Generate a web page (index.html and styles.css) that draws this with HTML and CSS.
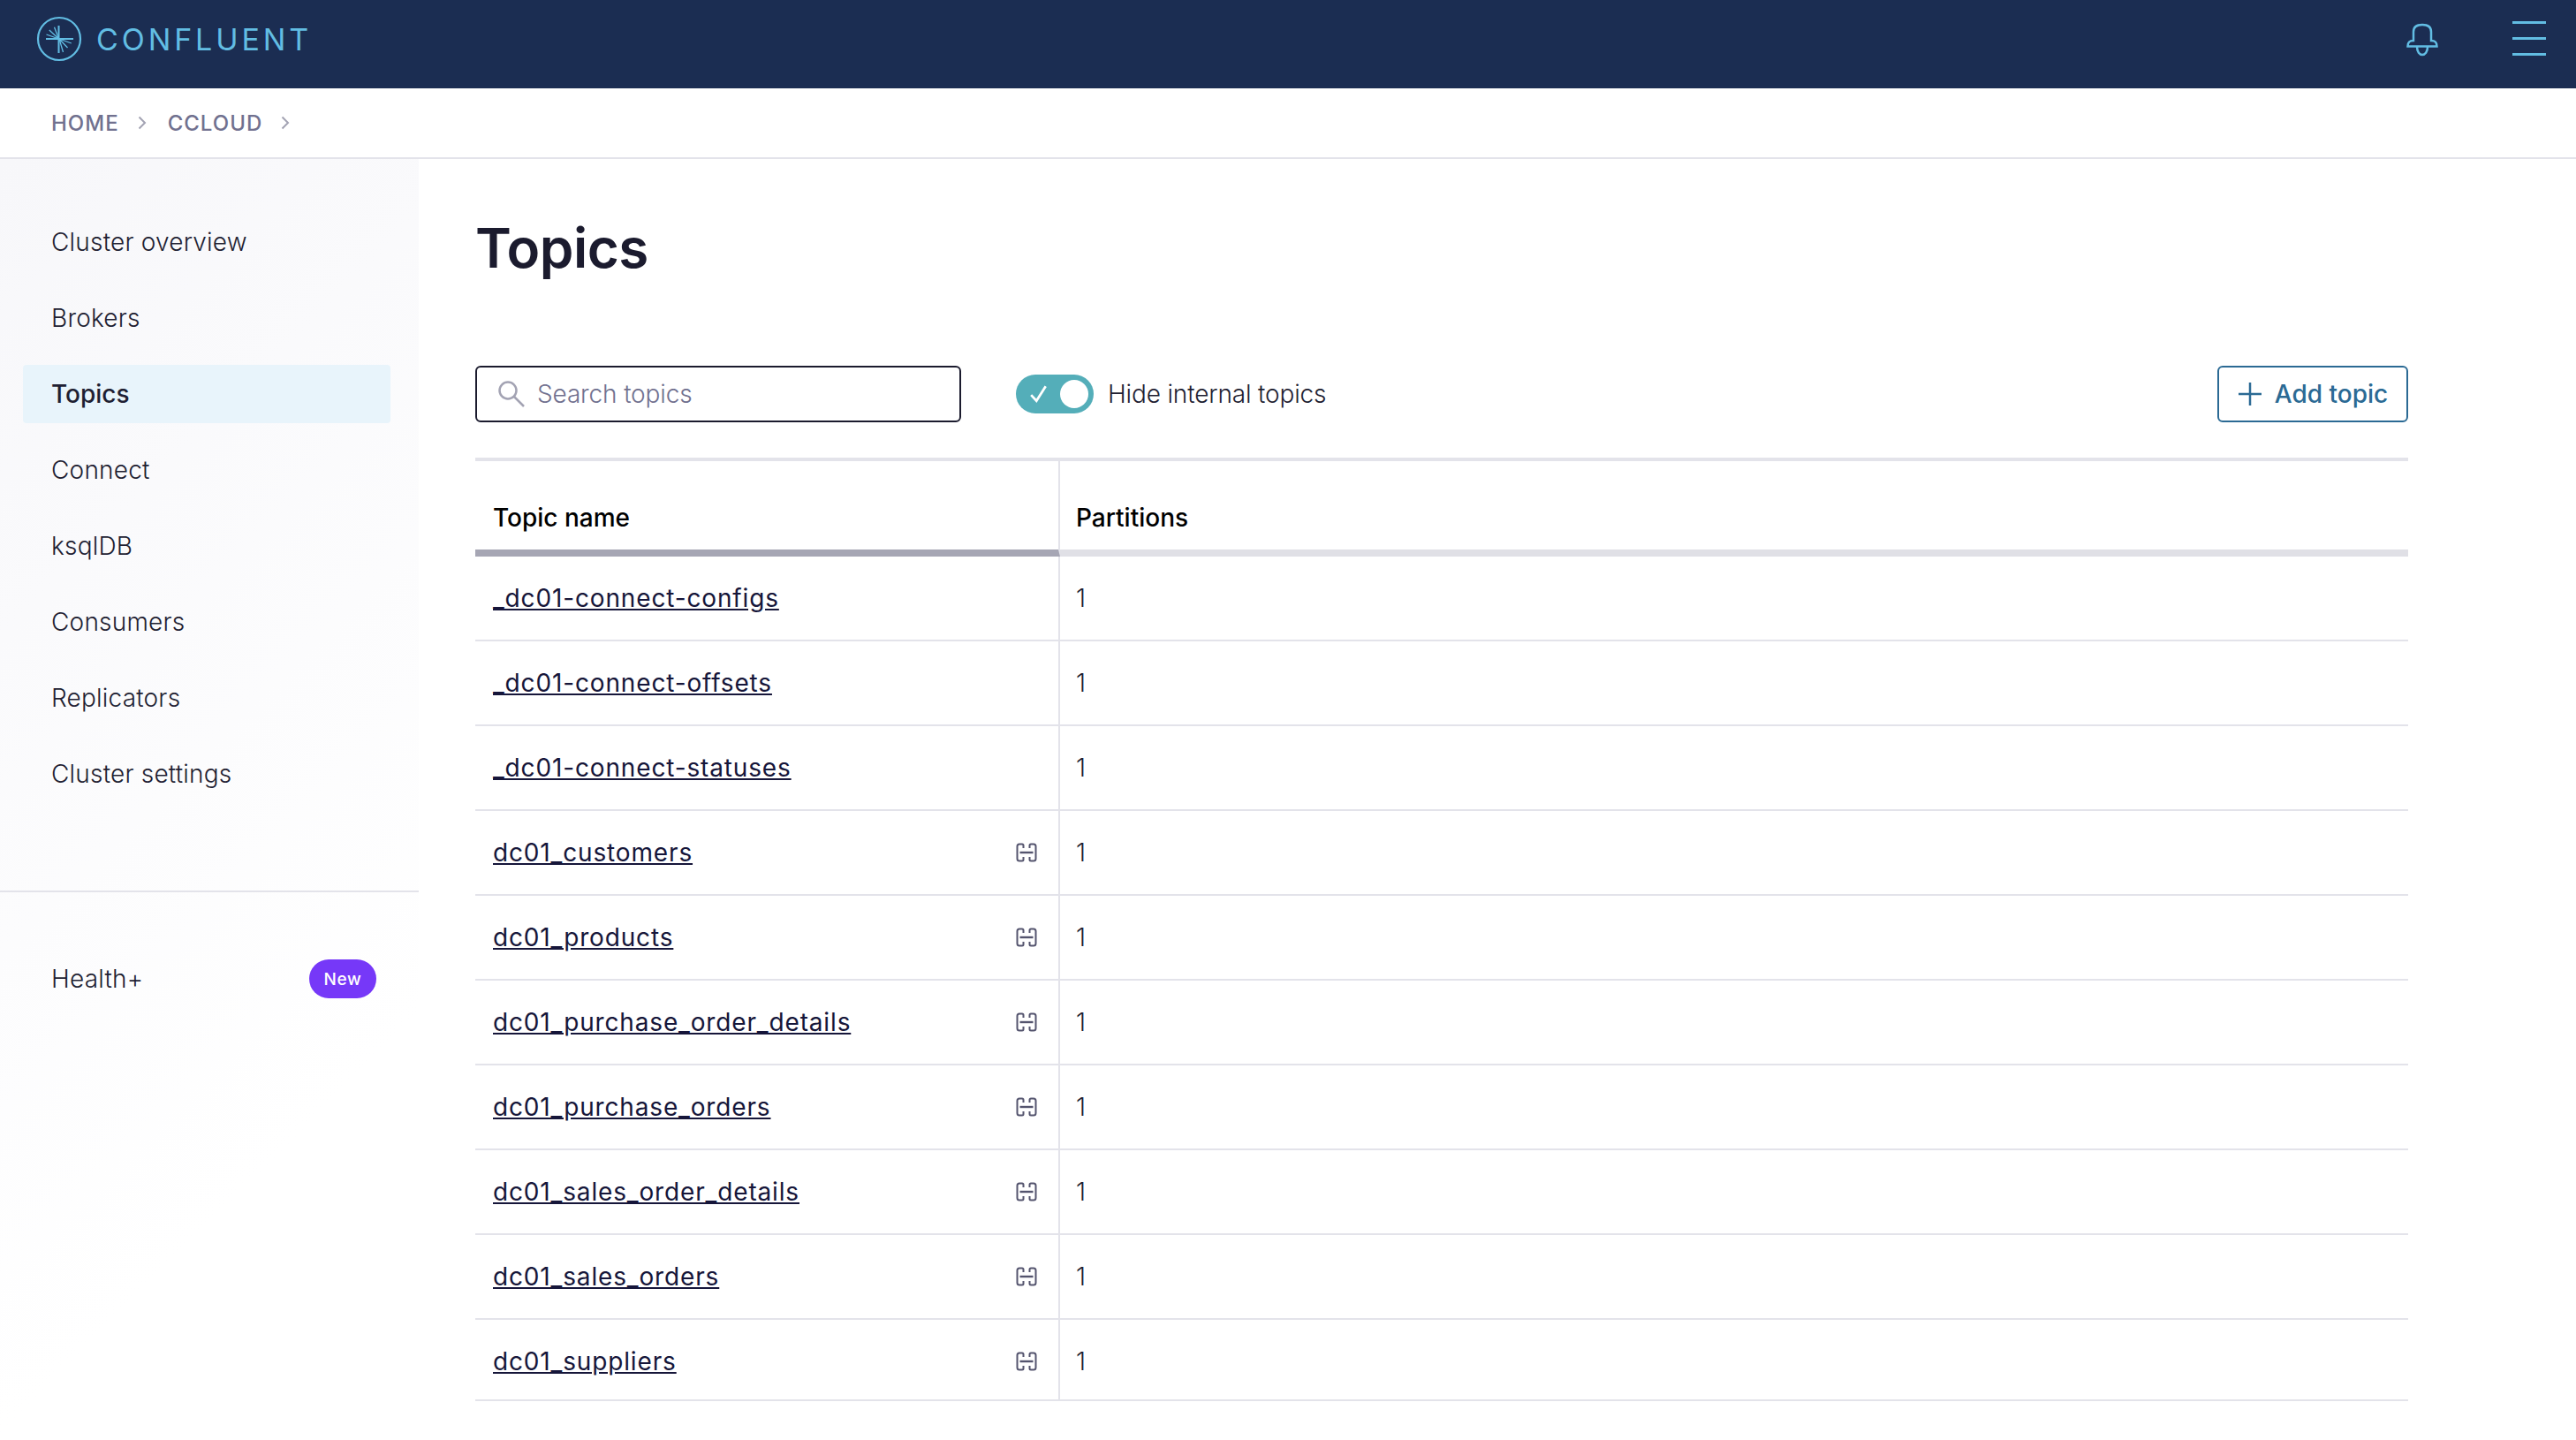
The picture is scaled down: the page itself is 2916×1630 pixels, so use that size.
FILE: index.html
```html
<!DOCTYPE html>
<html lang="en">
<head>
    <meta charset="UTF-8">
    <title>Topics</title>
    <link rel="stylesheet" href="styles.css">
</head>
<body>
    <header class="topbar">
        <a class="logo">
            <svg class="logo-mark" viewBox="0 0 52 52" fill="none" stroke="#62bde3">
                <circle cx="26" cy="26" r="24" stroke-width="2.200"/>
                <path stroke-width="2" d="M25.500 11V42M11 26H42"/>
                <path stroke-width="1.300" d="M25.500 26 20.500 12.700M25.500 26 14.800 16M25.500 26 11.500 21M26 26 30.500 41M26 26 35.500 36M26 26 39.800 31"/>
            </svg>
            <span class="logo-text">CONFLUENT</span>
        </a>
        <div class="topbar-actions">
            <svg class="bell" viewBox="0 0 36 38" fill="none" stroke="#62bde3" stroke-width="2.500">
                <path d="M8 20V10C8 5 11 2 18 2S28 5 28 10V20C32 20 34.500 21 34.500 26.500H1.500C1.500 21 4 20 8 20Z"/>
                <path d="M12 27C12 33 15 36 18 36S24 33 24 27"/>
            </svg>
            <div class="menu-icon"><span></span><span></span><span></span></div>
        </div>
    </header>

    <nav class="breadcrumb">
        <span>Home</span>
        <svg class="crumb-arrow" viewBox="0 0 10 16"><path d="M1.500 1.500 8 8 1.500 14.500"/></svg>
        <span>ccloud</span>
        <svg class="crumb-arrow" viewBox="0 0 10 16"><path d="M1.500 1.500 8 8 1.500 14.500"/></svg>
    </nav>

    <div class="layout">
        <aside class="sidebar">
            <ul class="side-nav">
                <li>Cluster overview</li>
                <li>Brokers</li>
                <li class="active">Topics</li>
                <li>Connect</li>
                <li>ksqlDB</li>
                <li>Consumers</li>
                <li>Replicators</li>
                <li>Cluster settings</li>
            </ul>
            <div class="side-extra">
                <span>Health+</span>
                <span class="badge">New</span>
            </div>
        </aside>

        <main class="content">
            <h1>Topics</h1>

            <div class="toolbar">
                <label class="search">
                    <svg class="search-icon" viewBox="0 0 32 32" fill="none" stroke="#a3a3b3" stroke-width="2.500">
                        <circle cx="12" cy="12" r="9.500"/>
                        <path d="M19 19 30 30"/>
                    </svg>
                    <input type="text" placeholder="Search topics">
                </label>
                <div class="toggle">
                    <span class="switch">
                        <svg viewBox="0 0 20 20" fill="none" stroke="#fff" stroke-width="2.500"><path d="M2 11 7.500 17 17 2"/></svg>
                        <span class="knob"></span>
                    </span>
                    <span>Hide internal topics</span>
                </div>
                <button class="add-btn">
                    <svg viewBox="0 0 28 28" fill="none" stroke="#2b6a94" stroke-width="2.500"><path d="M14 1V27M1 14H27"/></svg>
                    Add topic
                </button>
            </div>

            <div class="table">
                <div class="row head">
                    <div class="cell name sorted">Topic name</div>
                    <div class="cell count">Partitions</div>
                </div>
                <div class="row">
                    <div class="cell name"><a>_dc01-connect-configs</a></div>
                    <div class="cell count">1</div>
                </div>
                <div class="row">
                    <div class="cell name"><a>_dc01-connect-offsets</a></div>
                    <div class="cell count">1</div>
                </div>
                <div class="row">
                    <div class="cell name"><a>_dc01-connect-statuses</a></div>
                    <div class="cell count">1</div>
                </div>
                <div class="row">
                    <div class="cell name"><a>dc01_customers</a><svg class="link-icon"><use href="#linked"/></svg></div>
                    <div class="cell count">1</div>
                </div>
                <div class="row">
                    <div class="cell name"><a>dc01_products</a><svg class="link-icon"><use href="#linked"/></svg></div>
                    <div class="cell count">1</div>
                </div>
                <div class="row">
                    <div class="cell name"><a>dc01_purchase_order_details</a><svg class="link-icon"><use href="#linked"/></svg></div>
                    <div class="cell count">1</div>
                </div>
                <div class="row">
                    <div class="cell name"><a>dc01_purchase_orders</a><svg class="link-icon"><use href="#linked"/></svg></div>
                    <div class="cell count">1</div>
                </div>
                <div class="row">
                    <div class="cell name"><a>dc01_sales_order_details</a><svg class="link-icon"><use href="#linked"/></svg></div>
                    <div class="cell count">1</div>
                </div>
                <div class="row">
                    <div class="cell name"><a>dc01_sales_orders</a><svg class="link-icon"><use href="#linked"/></svg></div>
                    <div class="cell count">1</div>
                </div>
                <div class="row last">
                    <div class="cell name"><a>dc01_suppliers</a><svg class="link-icon"><use href="#linked"/></svg></div>
                    <div class="cell count">1</div>
                </div>
            </div>
        </main>
    </div>

    <svg class="defs" width="0" height="0">
        <symbol id="linked" viewBox="0 0 24 22">
            <path fill="none" stroke="#54546e" stroke-width="2" d="M8.500 6V3C8.500 2 8 1.500 7 1.500H4C2.500 1.500 1.500 2.500 1.500 4V18C1.500 19.500 2.500 20.500 4 20.500H7C8 20.500 8.500 20 8.500 19V16M15.500 6V3C15.500 2 16 1.500 17 1.500H20C21.500 1.500 22.500 2.500 22.500 4V18C22.500 19.500 21.500 20.500 20 20.500H17C16 20.500 15.500 20 15.500 19V16"/>
            <path fill="none" stroke="#54546e" stroke-width="2.400" d="M4.500 11H19.500"/>
        </symbol>
    </svg>
</body>
</html>
```
FILE: styles.css
```css
* {
    margin: 0;
    padding: 0;
    box-sizing: border-box;
}

body {
    font-family: 'Inter', 'Liberation Sans', sans-serif;
    font-size: 28px;
    color: #1f1f33;
    background: #fff;
    overflow: hidden;
}

/* Top bar */
.topbar {
    height: 100px;
    background: #1b2d52;
    display: flex;
    align-items: flex-start;
    justify-content: space-between;
    padding: 18px 34px 0 41px;
}

.logo {
    display: flex;
    align-items: center;
    gap: 16px;
}

.logo-mark {
    width: 52px;
    height: 52px;
}

.logo-text {
    font-size: 34px;
    font-weight: 400;
    letter-spacing: 3.9px;
    color: #62bde3;
}

.topbar-actions {
    display: flex;
    align-items: flex-start;
    gap: 84px;
}

.bell {
    width: 36px;
    height: 38px;
    margin-top: 8px;
}

.menu-icon {
    display: flex;
    flex-direction: column;
    gap: 15px;
    width: 38px;
    margin-top: 6px;
}

.menu-icon span {
    height: 3px;
    background: #62bde3;
}

/* Breadcrumb */
.breadcrumb {
    height: 80px;
    border-bottom: 2px solid #e3e3ea;
    display: flex;
    align-items: center;
    padding-left: 58px;
    font-size: 24px;
    font-weight: 500;
    letter-spacing: 1px;
    text-transform: uppercase;
    color: #71718f;
}

.crumb-arrow {
    width: 10px;
    height: 16px;
    margin: 0 24px 0 21px;
    fill: none;
    stroke: #a3a3b3;
    stroke-width: 2;
}

/* Layout */
.layout {
    display: flex;
    height: 1450px;
}

.sidebar {
    width: 474px;
    flex-shrink: 0;
    padding-top: 61px;
    background: linear-gradient(135deg, #f7f7fa 0%, #fff 75%);
}

.side-nav {
    list-style: none;
    padding: 0 32px 0 26px;
    height: 767px;
}

.side-nav li {
    height: 66px;
    margin-bottom: 20px;
    padding-left: 32px;
    display: flex;
    align-items: center;
    font-weight: 300;
    letter-spacing: 0.2px;
    color: #1f1f33;
}

.side-nav li.active {
    background: #e8f4fb;
    border-radius: 4px;
    font-weight: 500;
    letter-spacing: 0;
}

.side-extra {
    border-top: 2px solid #e3e3ea;
    padding: 76px 48px 0 58px;
    display: flex;
    align-items: center;
    justify-content: space-between;
    font-weight: 300;
    letter-spacing: 0.2px;
}

.badge {
    background: #7638f8;
    color: #fff;
    font-size: 19px;
    font-weight: 500;
    letter-spacing: 0.6px;
    height: 44px;
    width: 76px;
    border-radius: 22px;
    display: flex;
    align-items: center;
    justify-content: center;
}

/* Main content */
.content {
    flex: 1;
    padding: 65px 190px 0 64px;
}

h1 {
    font-size: 62px;
    font-weight: 600;
    line-height: 72px;
    color: #1b1b2e;
    letter-spacing: -0.5px;
}

.toolbar {
    display: flex;
    align-items: center;
    margin-top: 97px;
    height: 64px;
}

.search {
    width: 550px;
    height: 64px;
    border: 2px solid #1b1b2e;
    border-radius: 6px;
    display: flex;
    align-items: center;
    padding-left: 23px;
    gap: 13px;
}

.search-icon {
    width: 32px;
    height: 32px;
}

.search input {
    flex: 1;
    min-width: 0;
    border: none;
    outline: none;
    font: inherit;
    font-weight: 300;
    letter-spacing: -0.15px;
}

.search input::placeholder {
    color: #71718f;
    opacity: 1;
}

.toggle {
    display: flex;
    align-items: center;
    gap: 16px;
    margin-left: 62px;
    font-weight: 300;
    letter-spacing: -0.15px;
}

.switch {
    width: 88px;
    height: 44px;
    border-radius: 22px;
    background: #54aeb9;
    display: flex;
    align-items: center;
    justify-content: space-between;
    padding: 0 0 0 15px;
}

.switch svg {
    width: 22px;
    height: 22px;
}

.knob {
    width: 32px;
    height: 32px;
    border-radius: 50%;
    background: #fff;
    margin-right: 6px;
}

.add-btn {
    margin-left: auto;
    width: 216px;
    height: 64px;
    border: 2px solid #2b6a94;
    border-radius: 6px;
    background: #fff;
    color: #2b6a94;
    font: inherit;
    font-weight: 500;
    display: flex;
    align-items: center;
    justify-content: center;
    gap: 14px;
}

.add-btn svg {
    width: 28px;
    height: 28px;
}

/* Table */
.table {
    margin-top: 40px;
    border-top: 4px solid #e3e3ea;
}

.row {
    display: flex;
    height: 96px;
    border-bottom: 2px solid #e3e3ea;
}

.row.head {
    height: 108px;
    border-bottom: none;
}

.row.last {
    height: 92px;
}

.row.last .cell {
    padding-top: 3px;
}

.cell {
    display: flex;
    align-items: center;
    padding-left: 20px;
}

.cell.count {
    padding-left: 18px;
}

.name {
    width: 662px;
    justify-content: space-between;
    padding-right: 24px;
    border-right: 2px solid #e3e3ea;
}

.count {
    flex: 1;
    font-weight: 300;
}

.head .cell {
    font-size: 28px;
    font-weight: 500;
    color: #000;
    padding-top: 27px;
    border-bottom: 8px solid #e0e0e6;
}

.head .sorted {
    border-bottom-color: #a6a6b4;
}

.name a {
    color: #16163a;
    text-decoration: underline;
    font-weight: 400;
    letter-spacing: 0.85px;
}

.link-icon {
    width: 24px;
    height: 22px;
}

.defs {
    position: absolute;
}
```
